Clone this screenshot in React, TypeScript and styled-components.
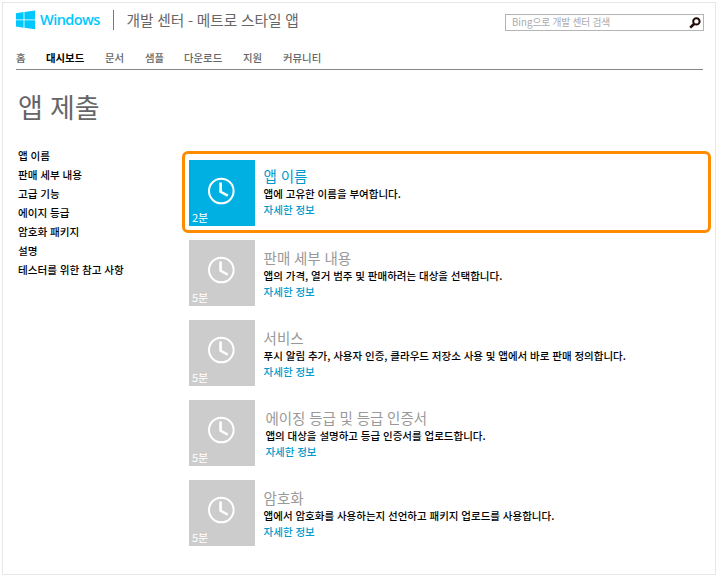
import React from "react";
import styled, { createGlobalStyle } from "styled-components";

const GlobalStyle = createGlobalStyle`
  * { box-sizing: border-box; }
  body { margin: 0; background: #fff; font-family: "Noto Sans CJK KR", sans-serif; }
  a { text-decoration: none; color: inherit; }
  h1, h2, p { margin: 0; font-weight: 400; }
`;

const Page = styled.div`
  width: 714px;
  height: 573px;
  margin: 2px;
  border: 1px solid #e6e6e6;
  overflow: hidden;
`;

const Header = styled.header`
  display: flex;
  align-items: flex-start;
  height: 40px;
  padding: 7px 11px 0 13px;
`;

const Brand = styled.a`
  display: flex;
  height: 21px;
  color: #00c8ff;
`;

const BrandName = styled.span`
  width: 67px;
  margin-left: 5px;
  font: 600 14.5px/20px "Open Sans", sans-serif;
  letter-spacing: -0.55px;
`;

const SiteTitle = styled.span`
  height: 20px;
  margin-left: 6px;
  padding-left: 12.5px;
  border-left: 1px solid #777;
  color: #666;
  font-size: 14.7px;
  word-spacing: 0.4px;
  line-height: 19px;
  white-space: nowrap;
`;

const SearchBox = styled.div`
  display: flex;
  align-items: center;
  justify-content: space-between;
  width: 199px;
  height: 17px;
  margin: 4px 0 0 auto;
  padding: 0 2px 0 6px;
  border: 1px solid #b4b4b4;
  color: #aaa;
  font-size: 9.7px;
  line-height: 15px;
`;

const Nav = styled.nav`
  display: grid;
  grid-template-columns: 30px 59px 40px 39px 59px 40px 1fr;
  height: 27px;
  margin: 0 12px 0 13px;
  border-bottom: 1px solid #858585;
`;

const NavLink = styled.a<{ $active?: boolean }>`
  color: ${(p) => (p.$active ? "#000" : "#666")};
  font-size: 10.4px;
  font-weight: ${(p) => (p.$active ? 700 : 500)};
  line-height: 30px;
  white-space: nowrap;
`;

const Heading = styled.h1`
  height: 76px;
  padding: 18px 0 0 15px;
  color: #666;
  font-size: 27px;
  word-spacing: 1px;
  line-height: 38px;
`;

const Body = styled.div`
  display: grid;
  grid-template-columns: 163px 1fr;
`;

const SideList = styled.ul`
  margin: 0;
  padding: 1px 0 0 15px;
  list-style: none;
`;

const SideItem = styled.li`
  height: 19px;
  color: #000;
  font-size: 10.6px;
  font-weight: 500;
  word-spacing: 0.4px;
  line-height: 18px;
  white-space: nowrap;
`;

const Steps = styled.main`
  display: flex;
  flex-direction: column;
  padding: 5px 4px 0 15px;
`;

const Step = styled.section<{ $active?: boolean }>`
  display: flex;
  height: ${(p) => (p.$active ? 82 : 80)}px;
  margin-left: ${(p) => (p.$active ? 1 : 0)}px;
  padding: ${(p) => (p.$active ? "6px 0 0 4px" : "7px 0 0 8px")};
  border: ${(p) => (p.$active ? "3px solid #ff8c00" : "0")};
  border-radius: 6px;
`;

const Tile = styled.div<{ $active?: boolean }>`
  display: flex;
  flex-direction: column;
  justify-content: space-between;
  width: 66px;
  height: 66px;
  padding: ${(p) => (p.$active ? 17 : 16)}px 0 2px 3px;
  background: ${(p) => (p.$active ? "#00b0e2" : "#ccc")};
  color: #fff;
`;

const Minutes = styled.span`
  font-size: 11px;
  line-height: 14px;
`;

const StepText = styled.div<{ $indent: number }>`
  padding: 7px 0 0 ${(p) => p.$indent}px;
  white-space: nowrap;
`;

const StepTitle = styled.h2<{ $active?: boolean }>`
  height: ${(p) => (p.$active ? 19 : 21)}px;
  color: ${(p) => (p.$active ? "#0099cc" : "#999")};
  font-size: 14.5px;
  word-spacing: 0.5px;
  line-height: ${(p) => (p.$active ? 18 : 21)}px;
`;

const StepSummary = styled.p`
  color: #000;
  font-size: 10.5px;
  font-weight: 500;
  word-spacing: 0.48px;
  line-height: 16px;
`;

const MoreLink = styled.a`
  display: block;
  color: #0099cc;
  font-size: 10.5px;
  font-weight: 500;
  word-spacing: 0.48px;
  line-height: 16px;
`;

const WindowsLogo = () => (
  <svg width="19" height="20" viewBox="0 0 19 20" fill="#00c8ff">
    <path d="M0 3.2 7.6 2.1V9.4H0zM8.4 2 19 .6V9.4H8.4zM0 10.2H7.6V17.7L0 16.6zM8.4 10.2H19V19.2L8.4 17.8z" />
  </svg>
);

const SearchIcon = () => (
  <svg width="12" height="12" viewBox="0 0 12 12" fill="none" stroke="#210b06">
    <circle cx="7.4" cy="4.4" r="3.2" strokeWidth="2" />
    <path d="M5 7 1.2 10.6" strokeWidth="2.6" />
  </svg>
);

const ClockIcon = () => (
  <svg width="28" height="28" viewBox="0 0 28 28" fill="none" stroke="#fff">
    <circle cx="14.3" cy="14" r="12.3" strokeWidth="2" />
    <path d="M13.6 5.5V14.8L20.8 18.6" strokeWidth="2.6" />
  </svg>
);

const ClockHolder = styled.div`
  height: 28px;
  padding-left: 15px;
  line-height: 0;
`;

const navItems = ["홈", "대시보드", "문서", "샘플", "다운로드", "지원", "커뮤니티"];

const sideItems = [
  "앱 이름",
  "판매 세부 내용",
  "고급 기능",
  "에이지 등급",
  "암호화 패키지",
  "설명",
  "테스터를 위한 참고 사항",
];

const steps = [
  { title: "앱 이름", summary: "앱에 고유한 이름을 부여합니다.", minutes: "2분", indent: 8.6, active: true },
  { title: "판매 세부 내용", summary: "앱의 가격, 열거 범주 및 판매하려는 대상을 선택합니다.", minutes: "5분", indent: 8.6 },
  { title: "서비스", summary: "푸시 알림 추가, 사용자 인증, 클라우드 저장소 사용 및 앱에서 바로 판매 정의합니다.", minutes: "5분", indent: 8.6 },
  { title: "에이징 등급 및 등급 인증서", summary: "앱의 대상을 설명하고 등급 인증서를 업로드합니다.", minutes: "5분", indent: 10.4 },
  { title: "암호화", summary: "앱에서 암호화를 사용하는지 선언하고 패키지 업로드를 사용합니다.", minutes: "5분", indent: 8.6 },
];

export default function App() {
  return (
    <>
      <GlobalStyle />
      <Page>
        <Header>
          <Brand>
            <WindowsLogo />
            <BrandName>Windows</BrandName>
          </Brand>
          <SiteTitle>개발 센터 - 메트로 스타일 앱</SiteTitle>
          <SearchBox>
            <span>Bing으로 개발 센터 검색</span>
            <SearchIcon />
          </SearchBox>
        </Header>
        <Nav>
          {navItems.map((item, i) => (
            <NavLink key={item} $active={i === 1}>{item}</NavLink>
          ))}
        </Nav>
        <Heading>앱 제출</Heading>
        <Body>
          <SideList>
            {sideItems.map((item) => (
              <SideItem key={item}>{item}</SideItem>
            ))}
          </SideList>
          <Steps>
            {steps.map((s) => (
              <Step key={s.title} $active={s.active}>
                <Tile $active={s.active}>
                  <ClockHolder><ClockIcon /></ClockHolder>
                  <Minutes>{s.minutes}</Minutes>
                </Tile>
                <StepText $indent={s.indent}>
                  <StepTitle $active={s.active}>{s.title}</StepTitle>
                  <StepSummary>{s.summary}</StepSummary>
                  <MoreLink>자세한 정보</MoreLink>
                </StepText>
              </Step>
            ))}
          </Steps>
        </Body>
      </Page>
    </>
  );
}
